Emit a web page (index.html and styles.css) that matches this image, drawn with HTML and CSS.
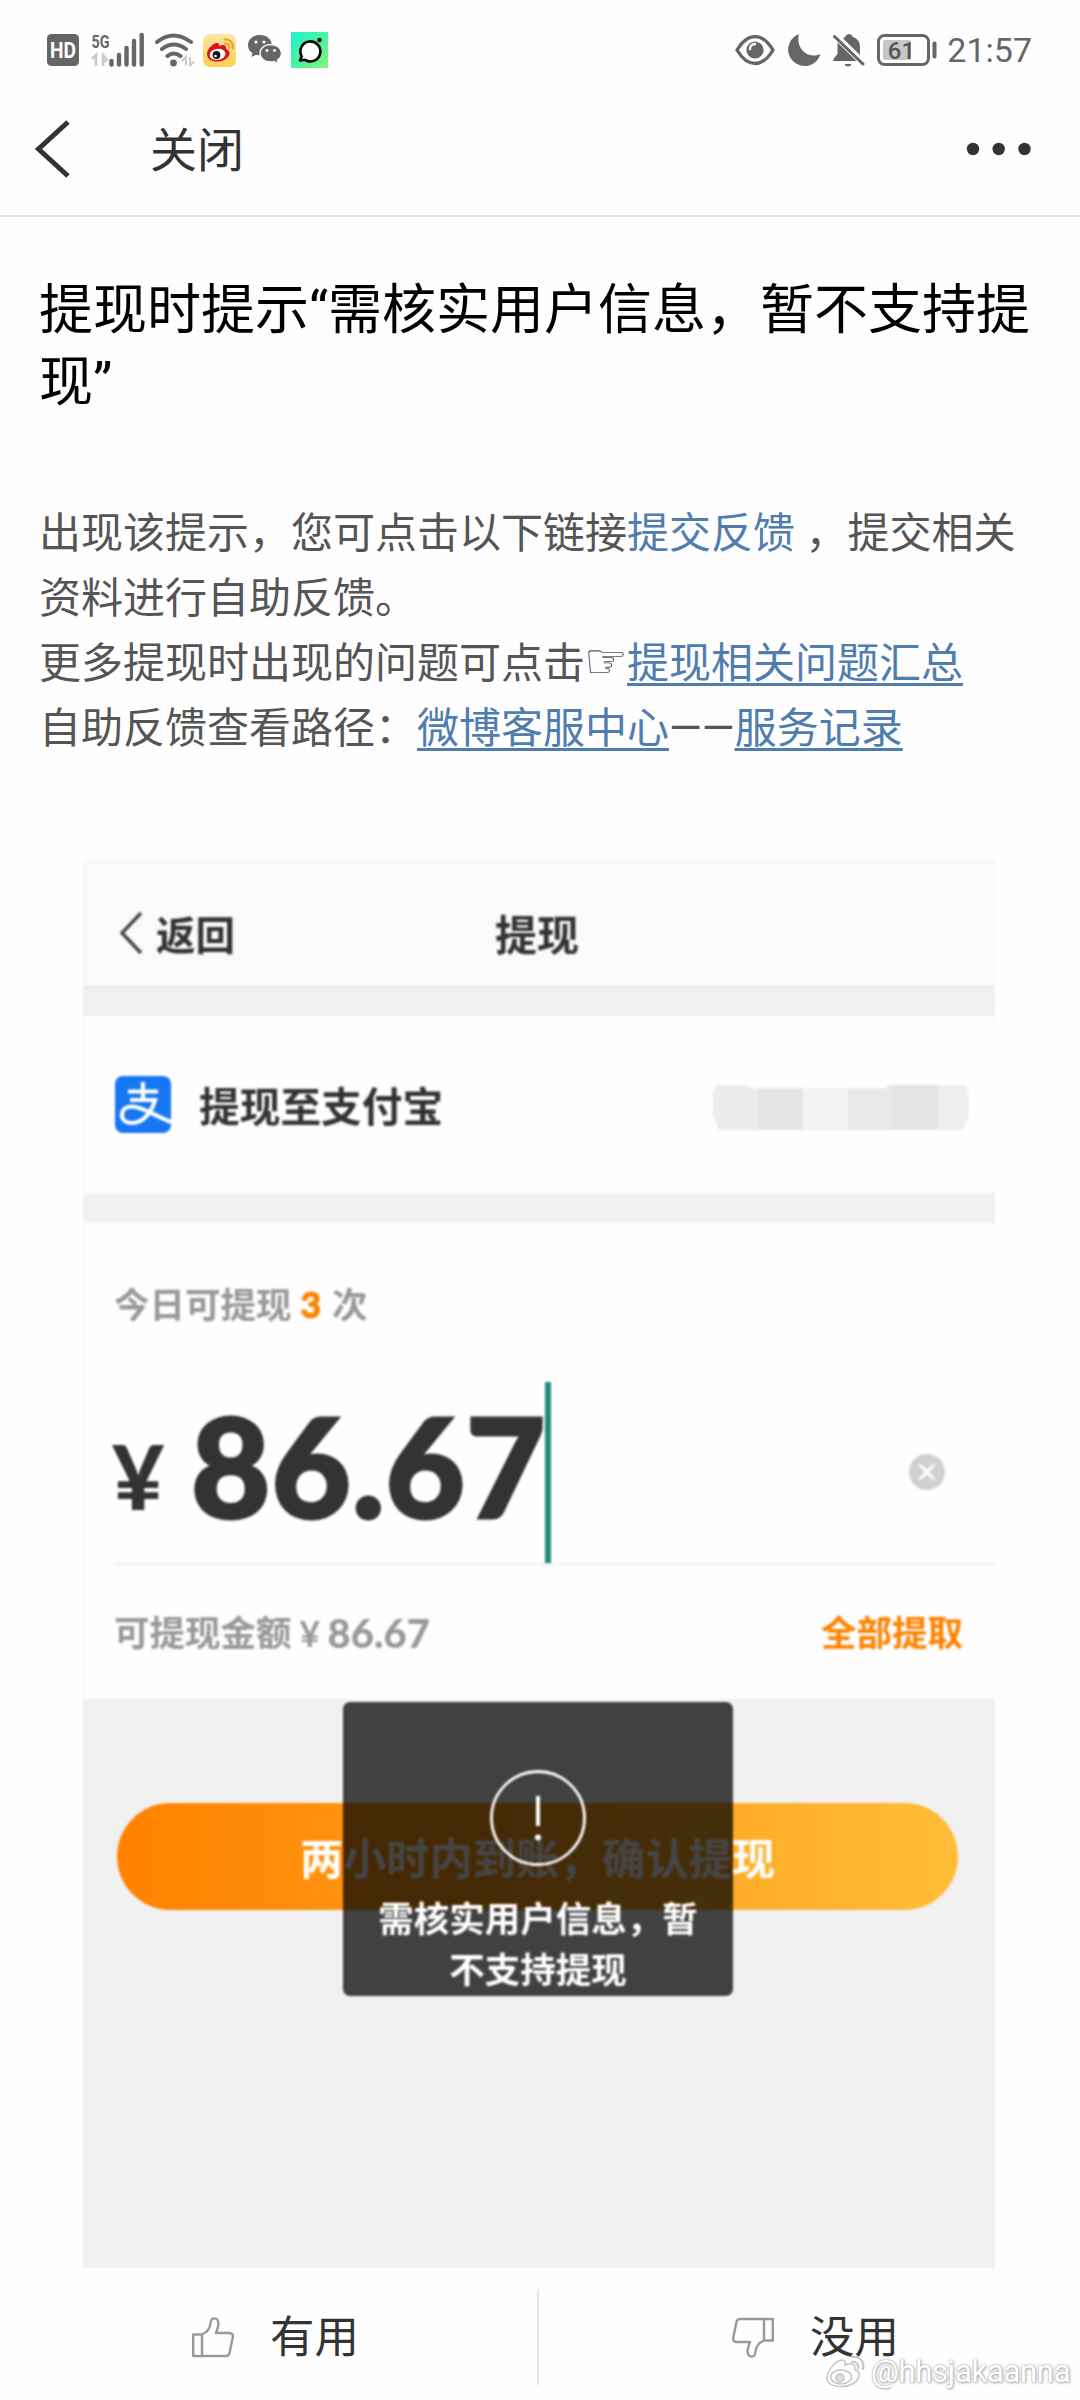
FILE: index.html
```html
<!DOCTYPE html>
<html lang="zh-CN">
<head>
<meta charset="utf-8">
<title>提现帮助</title>
<link rel="stylesheet" href="styles.css">
</head>
<body>
<div class="status">
  <div class="status-left">
    <svg class="hd" width="32" height="32" viewBox="0 0 32 32"><rect width="32" height="32" rx="4.500" fill="#666"/><text x="16" y="23.500" text-anchor="middle" textLength="26" lengthAdjust="spacingAndGlyphs" class="hd-text">HD</text></svg>
    <svg class="signal" width="53" height="40" viewBox="91 30 53 40">
      <text x="91.500" y="47.500" textLength="18" lengthAdjust="spacingAndGlyphs" class="net">5G</text>
      <path d="M92 59l4-4v11M103 66V55l4 5-4 2" fill="none" stroke="#ccc" stroke-width="2.600"/>
      <path d="M111.500 61v3.500M119 55v9.500M126.500 48v16.500M134 41v23.500M141.700 35v29.500" stroke="#666" stroke-width="4.400" stroke-linecap="round"/>
    </svg>
    <svg class="wifi" width="42" height="34" viewBox="153 33 42 34">
      <g fill="none" stroke="#666" stroke-width="4" stroke-linecap="round"><path d="M157 42Q173 29 191 42M162 49Q173.500 40 186 49M167.500 56Q173.500 51 180.500 56"/></g>
      <circle cx="173.500" cy="63" r="3.400" fill="#666"/>
      <path d="M182 61l4-4v8.500M190 57v8.500l4-4" fill="none" stroke="#ccc" stroke-width="2.200"/>
    </svg>
    <svg class="weibo" width="34" height="33" viewBox="0 0 34 33">
      <defs><linearGradient id="wb" x2="0" y2="1"><stop offset="0" stop-color="#fbe7a4"/><stop offset="1" stop-color="#fbcf50"/></linearGradient></defs>
      <rect width="33" height="33" rx="7" fill="url(#wb)"/>
      <path d="M4 20c0-5 6-11 10-11 2 0 2.500 1 2 3 4-2 8-1 7 3 3 1 4 3 3.500 5-1 5-7 7.500-12.500 7.500S4 25 4 20z" fill="#d9141e"/>
      <ellipse cx="14.500" cy="20.500" rx="8" ry="5.500" fill="#fff" transform="rotate(-8 14 20)"/>
      <circle cx="13.500" cy="21" r="3.900" fill="#111"/><circle cx="12.500" cy="22" r="1.300" fill="#fff"/>
      <path d="M22 9.500c3-.5 5 2 4 4.500M21.500 5.500c5.500-1 9.500 4 8 9" fill="none" stroke="#eda030" stroke-width="2.200" stroke-linecap="round"/>
    </svg>
    <svg class="wechat" width="34" height="30" viewBox="0 0 34 30">
      <path d="M12 0C5 0 0 4.500 0 10.500c0 3.500 2 6 4.500 7.800L3.500 22l4.500-2.300c1.200.4 2.600.6 4 .6 7 0 12-4.300 12-9.800S19 0 12 0z" fill="#666"/>
      <path d="M22.500 9.500c-6 0-10.500 3.800-10.500 8.800S16.500 27 22.500 27c1.300 0 2.500-.1 3.500-.5l4.500 2-1-3.400c2.300-1.500 4-3.800 4-6.800 0-5-4.700-8.800-11-8.800z" fill="#666" stroke="#fff" stroke-width="1.300"/>
      <g fill="#fff"><circle cx="8" cy="7" r="1.600"/><circle cx="16" cy="7" r="1.600"/><circle cx="19" cy="15.500" r="1.400"/><circle cx="26.500" cy="15.500" r="1.400"/></g>
    </svg>
    <svg class="bubble" width="37" height="36" viewBox="0 0 37 36">
      <defs><linearGradient id="gb" x2="1" y2="1"><stop offset="0" stop-color="#1bf5cc"/><stop offset=".5" stop-color="#48f3a2"/><stop offset="1" stop-color="#85f47a"/></linearGradient></defs>
      <rect width="37" height="36" fill="url(#gb)"/>
      <path d="M9 28.500l1.700-4.200A10 10 0 1 1 14 27.800z" fill="#fff" stroke="#000" stroke-width="2.600" stroke-linejoin="round"/>
      <circle cx="28.500" cy="8" r="2.200"/>
    </svg>
  </div>
  <div class="status-right">
    <svg class="eye" width="40" height="32" viewBox="0 0 40 32"><path d="M2 16Q10 2.500 20 2.500T38 16Q30 29.500 20 29.500T2 16z" fill="none" stroke="#666" stroke-width="3.400" stroke-linejoin="round"/><circle cx="20" cy="16" r="8.600" fill="#666"/><path d="M15 15c0-3 2-5 5-5" fill="none" stroke="#fff" stroke-width="2.400" stroke-linecap="round"/></svg>
    <svg class="moon" width="34" height="33" viewBox="0 0 34 33"><path d="M12 0A16.500 16.500 0 1 0 33.500 20C22 25.500 8 15 12 0z" fill="#666"/></svg>
    <svg class="bell" width="32" height="33" viewBox="0 0 32 33"><path d="M12 3q1.500-3 4-3t4 3c4.500 1.500 7 5 7 10v8L10 4.500zM4.500 8.500L23.500 27H0q0-2 4.500-7z" fill="#666"/><path d="M1.500 2.500L30 30" stroke="#666" stroke-width="3" stroke-linecap="round"/><path d="M11.500 30h7q-1 2.500-3.500 2.500t-3.500-2.500z" fill="#666"/></svg>
    <svg class="battery" width="61" height="32" viewBox="0 0 61 32"><rect x="1.500" y="1.500" width="50" height="29" rx="6" fill="none" stroke="#666" stroke-width="3"/><rect x="6" y="6" width="28" height="20" rx="2" fill="#c6c6c6"/><rect x="55.500" y="7.500" width="4" height="17" rx="1.800" fill="#666"/><text x="24.500" y="24.500" text-anchor="middle" class="bat-text">61</text></svg>
    <span class="clock">21:57</span>
  </div>
</div>

<header class="nav">
  <svg class="back" width="37" height="60" viewBox="0 0 37 60"><path d="M34 3L4.500 30 34 57" fill="none" stroke="#333" stroke-width="5"/></svg>
  <span class="close">关闭</span>
  <svg class="more" width="66" height="14" viewBox="0 0 66 14" fill="#333"><circle cx="7" cy="7" r="6.200"/><circle cx="32.700" cy="7" r="6.200"/><circle cx="58.500" cy="7" r="6.200"/></svg>
</header>

<main>
  <h1>提现时提示“需核实用户信息，暂不支持提现”</h1>
  <div class="answer">
    <p>出现该提示，您可点击以下链接<a class="plain">提交反馈</a> ，提交相关</p>
    <p>资料进行自助反馈。</p>
    <p>更多提现时出现的问题可点击<span class="hand">☞</span><a>提现相关问题汇总</a></p>
    <p>自助反馈查看路径：<a>微博客服中心</a>——<a>服务记录</a></p>
  </div>

  <section class="shot">
    <div class="shot-inner">
      <div class="shot-nav">
        <div class="shot-back"><svg width="24" height="44" viewBox="0 0 24 44"><path d="M22 2L3 22l19 20" fill="none" stroke="#444" stroke-width="3.400"/></svg><span>返回</span></div>
        <div class="shot-title">提现</div>
      </div>
      <div class="band"></div>
      <div class="payee">
        <svg width="56" height="57" viewBox="0 0 56 57"><rect width="56" height="57" rx="8" fill="#1677f2"/><path d="M13 15.500h30M28 6v18M15 24h25c-3 11-11 23-23 23-6 0-10-3-10-8s4-8.500 10-8.500c10 0 20 8 39 15.500" fill="none" stroke="#fff" stroke-width="4.200"/></svg>
        <span class="payee-name">提现至支付宝</span>
        <svg class="mosaic" width="256" height="45" viewBox="0 0 256 45"><path d="M4 0h30l2 3h9v42H6L0 30V6z" fill="#ececec"/><path d="M45 3h45v42H45z" fill="#e4e4e4"/><path d="M90 3h45v42H90z" fill="#f3f3f3"/><path d="M135 3h38l2-3h5v45h-45z" fill="#e8e8e8"/><path d="M180 0h45v45h-45z" fill="#e3e3e3"/><path d="M225 0h28l3 12v18l-5 15h-26z" fill="#eee"/></svg>
      </div>
      <div class="band band-second"></div>
      <div class="amount-box">
        <div class="times">今日可提现<b>3</b>次</div>
        <div class="amount">
          <span class="yen">¥</span><span class="figure">86.67</span><span class="caret"></span>
          <svg class="clear" width="36" height="36" viewBox="0 0 36 36"><circle cx="18" cy="18" r="18" fill="#d0d0d0"/><path d="M11 11l14 14M25 11L11 25" stroke="#fff" stroke-width="3"/></svg>
        </div>
        <div class="balance"><span>可提现金额</span><span class="bal-yen">¥</span><span class="bal-num">86.67</span><span class="all">全部提取</span></div>
      </div>
      <div class="pad">
        <div class="confirm">两小时内到账，确认提现</div>
        <div class="toast">
          <svg width="98" height="98" viewBox="0 0 98 98"><circle cx="49" cy="49" r="46.500" fill="none" stroke="#fff" stroke-width="2.800"/><path d="M49 27v30" stroke="#fff" stroke-width="4"/><circle cx="49" cy="68.500" r="3" fill="#fff"/></svg>
          <div>需核实用户信息，暂<br>不支持提现</div>
        </div>
      </div>
    </div>
  </section>
</main>

<footer>
  <div class="vote">
    <svg width="42" height="41" viewBox="0 0 42 41" fill="none" stroke="#999" stroke-width="2.400" stroke-linejoin="round"><path d="M1.200 17.500h8.800V39H1.200zM10 17.500C15 15.500 18 12 18.500 6c.3-3 1.500-4.600 3.800-4.600 3 0 4.500 2.500 4 6.600-.4 3-1.200 5-2.300 8h13c3 0 4.300 1.600 3.800 4.300L37.500 36c-.4 2-1.300 3-3.500 3H10"/></svg>
    <span>有用</span>
  </div>
  <div class="rule"></div>
  <div class="vote vote-no">
    <svg width="42" height="41" viewBox="0 0 42 41" fill="none" stroke="#999" stroke-width="2.400" stroke-linejoin="round"><path d="M40.800 23.500H32V2h8.800zM32 23.500c-5 2-8 5.500-8.500 11.500-.3 3-1.500 4.600-3.800 4.600-3 0-4.500-2.500-4-6.600.4-3 1.200-5 2.300-8H5c-3 0-4.300-1.600-3.800-4.300L4.500 5c.4-2 1.300-3 3.500-3h24"/></svg>
    <span>没用</span>
  </div>
</footer>
<div class="watermark">
  <svg width="42" height="36" viewBox="0 0 42 36"><g fill="#fff" stroke="#c4c4c4" stroke-width="1.500"><path d="M2 24C2 17 11 6 17 6c3 0 4 2 3 5 6-2.500 11-1 9.500 4.500 4 1 5.500 3.500 4.500 7-1.500 6-9 10-17 10S2 30 2 24z"/><ellipse cx="16" cy="23" rx="10.500" ry="7"/><circle cx="15" cy="24" r="4" fill="#ddd"/></g><path d="M27 8c4-1 7 2.500 6 6.500M27 3c7-1.500 13 4.500 11 12" fill="none" stroke="#c4c4c4" stroke-width="2" stroke-linecap="round"/></svg>
  <span>@hhsjakaanna</span>
</div>
</body>
</html>
```
FILE: styles.css
```css
* { box-sizing: border-box; }
body {
  margin: 0;
  width: 1080px;
  height: 2400px;
  overflow: hidden;
  position: relative;
  background: #fefefe;
  color: #333;
  font-family: Roboto, "Noto Sans CJK SC", sans-serif;
}
svg { display: block; flex: none; }
h1, p { margin: 0; font-weight: 400; }

.status {
  height: 100px;
  padding: 0 48px 0 47px;
  display: flex;
  justify-content: space-between;
  align-items: center;
}
.status-left, .status-right { display: flex; align-items: center; }
.signal { margin-left: 12px; overflow: visible; }
.wifi { margin-left: 9px; }
.weibo { margin-left: 8px; }
.wechat { margin-left: 11px; }
.bubble { margin-left: 9px; }
.hd-text { font: 700 22px Roboto, sans-serif; fill: #fff; }
.net { font: 700 19px Roboto, sans-serif; fill: #666; }
.moon { margin-left: 12px; }
.bell { margin-left: 12px; }
.battery { margin-left: 12px; }
.bat-text { font: 500 24px Roboto, sans-serif; fill: #555; }
.clock { margin-left: 9px; font-size: 34px; line-height: 40px; color: #666; }

.nav {
  height: 117px;
  padding: 0 48px 18px 34px;
  display: flex;
  align-items: center;
  border-bottom: 2px solid #e6e6e6;
}
.close { margin-left: 79px; font-size: 47px; line-height: 60px; padding-top: 4px; }
.more { margin-left: auto; }

main { padding: 58px 40px 0; }
h1 { margin-left: -1px; font-size: 54px; line-height: 72px; color: #000; }
.answer { margin: 82px 0 0 -1px; font-size: 42px; line-height: 65px; color: #555; }
.answer p { white-space: nowrap; height: 65px; }
.answer a { color: #507daf; text-decoration: underline; text-decoration-thickness: 3px; text-underline-offset: 5px; text-decoration-skip-ink: none; }
.answer a.plain { text-decoration: none; }
.hand { display: inline-block; width: 42px; text-indent: -1px; font-family: "DejaVu Sans", sans-serif; font-size: 49px; line-height: 40px; }

.shot { width: 912px; height: 1408px; margin: 99px 0 0 43px; overflow: hidden; background: #f1f1f1; }
.shot-inner { filter: blur(.9px); font-weight: 700; }
.shot-nav {
  height: 126px;
  padding: 19px 4px 0 36px;
  display: grid;
  grid-template-columns: 376px auto;
  align-items: center;
  background: #fafafa;
}
.shot-back { display: flex; align-items: center; gap: 13px; font-size: 39.500px; }
.shot-title { font-size: 42px; }
.band { height: 30px; background: #f1f1f1; border-top: 2px solid #e9e9e9; }
.band-second { border-top: 0; }
.payee { height: 177px; padding: 0 26px 0 32px; display: flex; align-items: center; background: #fefefe; }
.payee-name { margin: 0 0 0 28px; font-size: 40.700px; }
.mosaic { margin: 6px 0 0 auto; }
.amount-box { height: 476px; padding-left: 31px; color: #999; background: #fefefe; font-size: 35.500px; line-height: 50px; }
.times { padding-top: 57px; height: 159px; }
.times b { color: #ff8200; margin: 0 11px 0 9px; font-family: Lato, sans-serif; font-weight: 900; -webkit-text-stroke: 1px #ff8200; }
.amount {
  height: 183px;
  display: flex;
  align-items: stretch;
  border-bottom: 2px solid #eee;
  color: #333;
  font-family: Lato, sans-serif;
  font-weight: 900;
}
.yen { width: 79px; margin-left: -2px; font-size: 90px; line-height: 187px; }
.figure { width: 354px; font-size: 137px; line-height: 166px; letter-spacing: 1px; white-space: nowrap; -webkit-text-stroke: 3px #333; }
.caret { width: 6px; background: #20897b; }
.clear { margin: 72px 50px 0 auto; }
.balance { display: flex; padding: 44px 32px 0 0; }
.bal-yen { margin-left: 8px; width: 28px; font-family: Lato, sans-serif; }
.bal-num { font-family: Lato, sans-serif; font-size: 40px; font-weight: 900; line-height: 49px; }
.all { margin-left: auto; color: #ff8200; }

.pad { position: relative; height: 569px; padding: 104px 37px 0 34px; background: #f1f1f1; }
.confirm {
  height: 107px;
  border-radius: 54px;
  background: linear-gradient(90deg, #ff8200, #ffbd37);
  color: #fff;
  font-size: 43.200px;
  line-height: 115px;
  text-align: center;
}
.toast {
  position: absolute;
  left: 260px;
  top: 3px;
  width: 390px;
  height: 294px;
  padding-top: 67px;
  border-radius: 7px;
  background: rgba(0, 0, 0, .73);
  color: #fff;
  font-size: 35.500px;
  line-height: 51px;
  text-align: center;
}
.toast svg { margin: 0 auto 28px; }

footer { height: 132px; padding-top: 21px; display: flex; }
.vote { width: 537px; height: 96px; padding-left: 192px; display: flex; align-items: center; font-size: 44.500px; color: #333; }
.vote span { margin: -8px 0 0 36px; }
.rule { width: 2px; height: 96px; background: #e6e6e6; }
.vote-no { padding-left: 193px; }

.watermark {
  position: absolute;
  left: 825px;
  top: 2353px;
  display: flex;
  align-items: center;
  font-size: 31px;
  line-height: 38px;
  color: #fff;
  text-shadow: 0 0 2px #999, 1px 1px 3px #aaa;
}
.watermark span { margin-left: 4px; letter-spacing: -.3px; }
```
